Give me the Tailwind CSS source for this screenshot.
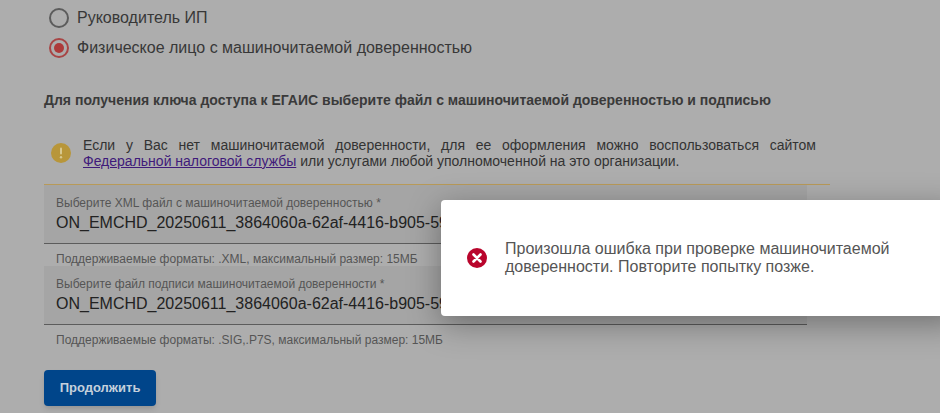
<!DOCTYPE html>
<html lang="ru">
<head>
    <meta charset="UTF-8">
    <meta name="viewport" content="width=device-width, initial-scale=1.0">
    <title>Ключ доступа к ЕГАИС</title>
    <script src="https://cdn.jsdelivr.net/npm/@tailwindcss/browser@4"></script>
</head>
<body class="relative w-[940px] h-[413px] overflow-hidden bg-[#adadad] font-['Liberation_Sans',Arial,sans-serif] text-[#333]">
    <div class="w-[786px] ml-[44px] pt-[3px]">
        <!-- Radio group -->
        <div class="flex flex-col pl-[5px]">
            <label class="flex items-center gap-[8px] h-[30px] text-base text-[#383838]">
                <span class="w-[20px] h-[20px] rounded-full border-2 border-[#5c5c5c]"></span>
                Руководитель ИП
            </label>
            <label class="flex items-center gap-[8px] h-[30px] text-base text-[#383838]">
                <span class="flex items-center justify-center w-[20px] h-[20px] rounded-full border-2 border-[#a84545]">
                    <span class="w-[10px] h-[10px] rounded-full bg-[#ad3a3a]"></span>
                </span>
                Физическое лицо с машиночитаемой доверенностью
            </label>
        </div>

        <p class="mt-[29px] text-sm leading-[16px] font-bold text-[#3a3a3a]">Для получения ключа доступа к ЕГАИС выберите файл с машиночитаемой доверенностью и подписью</p>

        <!-- Notice -->
        <div class="flex items-center mt-[25px] h-[40px] pl-[7px] pr-[14px]">
            <svg class="w-[20px] h-[20px] shrink-0" viewBox="0 0 20 20">
                <circle cx="10" cy="10" r="10" fill="#b8963a"/>
                <rect x="9" y="4.5" width="2" height="7" rx="1" fill="#d8c890"/>
                <circle cx="10" cy="14.2" r="1.2" fill="#d8c890"/>
            </svg>
            <p class="ml-[12px] text-sm leading-[16px] text-justify text-[#333]">Если у Вас нет машиночитаемой доверенности, для ее оформления можно воспользоваться сайтом <a href="#" class="underline text-[#3f1a7a]">Федеральной налоговой службы</a> или услугами любой уполномоченной на это организации.</p>
        </div>
        <div class="mt-[11px] h-px bg-[#b89a58]"></div>

        <!-- Files -->
        <div class="w-[763px]">
            <div class="h-[59px] pl-[12px] pt-[11px] bg-[#a5a5a5] border-b border-[#5c5c5c] overflow-hidden whitespace-nowrap">
                <div class="text-xs leading-[14px] text-[#555]">Выберите XML файл с машиночитаемой доверенностью *</div>
                <div class="text-base leading-[20px] mt-[3px] text-[#222]">ON_EMCHD_20250611_3864060a-62af-4416-b905-59a7c1d2e3f4.xml</div>
            </div>
            <div class="h-[22px] pl-[12px] pt-[8px] text-xs leading-[14px] text-[#555]">Поддерживаемые форматы: .XML, максимальный размер: 15МБ</div>
            <div class="h-[59px] pl-[12px] pt-[11px] bg-[#a5a5a5] border-b border-[#5c5c5c] overflow-hidden whitespace-nowrap">
                <div class="text-xs leading-[14px] text-[#555]">Выберите файл подписи машиночитаемой доверенности *</div>
                <div class="text-base leading-[20px] mt-[3px] text-[#222]">ON_EMCHD_20250611_3864060a-62af-4416-b905-59a7c1d2e3f4.sig</div>
            </div>
            <div class="h-[22px] pl-[12px] pt-[8px] text-xs leading-[14px] text-[#555]">Поддерживаемые форматы: .SIG,.P7S, максимальный размер: 15МБ</div>
        </div>

        <button class="mt-[23px] w-[112px] h-[36px] rounded-[4px] bg-[#00458a] text-[#c4d0dc] text-[13px] font-bold shadow-md">Продолжить</button>
    </div>

    <!-- Error toast -->
    <div class="absolute left-[441px] top-[200px] w-[520px] h-[116px] flex items-center rounded-[4px] bg-white shadow-[0_8px_32px_rgba(0,0,0,0.35)]">
        <svg class="ml-[26px] w-[20px] h-[20px] shrink-0" viewBox="0 0 20 20">
            <circle cx="10" cy="10" r="10" fill="#b9052c"/>
            <path d="M6.5 6.5l7 7M13.5 6.5l-7 7" stroke="#fff" stroke-width="2.6" stroke-linecap="round"/>
        </svg>
        <p class="ml-[18px] w-[400px] text-base leading-[18px] text-[#555]">Произошла ошибка при проверке машиночитаемой доверенности. Повторите попытку позже.</p>
    </div>
</body>
</html>
